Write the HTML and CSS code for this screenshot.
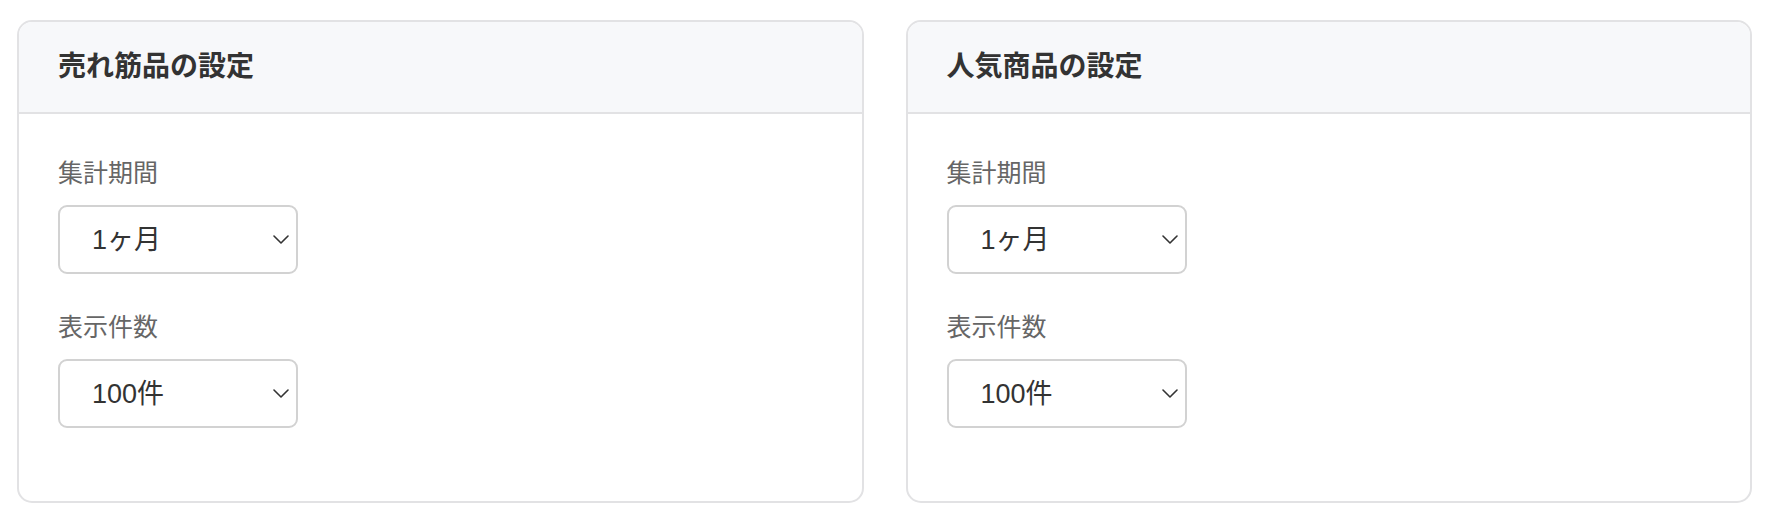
FILE: index.html
```html
<!DOCTYPE html>
<html lang="ja">
<head>
<meta charset="utf-8">
<title>設定</title>
<link rel="stylesheet" href="styles.css">
</head>
<body>
<div class="page">
  <section class="card">
    <header class="card-header"><h2 class="card-title">売れ筋品の設定</h2></header>
    <div class="card-body">
      <div class="field">
        <label class="field-label">集計期間</label>
        <div class="select-wrap">
          <select class="select"><option>1ヶ月</option></select>
          <svg class="chevron" width="16" height="9" viewBox="0 0 16 9"><path d="M1 1 L8 8 L15 1" fill="none" stroke="#333" stroke-width="1.6" stroke-linecap="round" stroke-linejoin="round"/></svg>
        </div>
      </div>
      <div class="field">
        <label class="field-label">表示件数</label>
        <div class="select-wrap">
          <select class="select"><option>100件</option></select>
          <svg class="chevron" width="16" height="9" viewBox="0 0 16 9"><path d="M1 1 L8 8 L15 1" fill="none" stroke="#333" stroke-width="1.6" stroke-linecap="round" stroke-linejoin="round"/></svg>
        </div>
      </div>
    </div>
  </section>
  <section class="card">
    <header class="card-header"><h2 class="card-title">人気商品の設定</h2></header>
    <div class="card-body">
      <div class="field">
        <label class="field-label">集計期間</label>
        <div class="select-wrap">
          <select class="select"><option>1ヶ月</option></select>
          <svg class="chevron" width="16" height="9" viewBox="0 0 16 9"><path d="M1 1 L8 8 L15 1" fill="none" stroke="#333" stroke-width="1.6" stroke-linecap="round" stroke-linejoin="round"/></svg>
        </div>
      </div>
      <div class="field">
        <label class="field-label">表示件数</label>
        <div class="select-wrap">
          <select class="select"><option>100件</option></select>
          <svg class="chevron" width="16" height="9" viewBox="0 0 16 9"><path d="M1 1 L8 8 L15 1" fill="none" stroke="#333" stroke-width="1.6" stroke-linecap="round" stroke-linejoin="round"/></svg>
        </div>
      </div>
    </div>
  </section>
</div>
</body>
</html>
```

FILE: styles.css
```css
* { box-sizing: border-box; }
html, body {
  margin: 0;
  background: #ffffff;
  font-family: "Liberation Sans", "Noto Sans CJK JP", sans-serif;
}
.page {
  display: grid;
  grid-template-columns: 1fr 1fr;
  gap: 42px;
  padding: 20px 16px 0 17px;
}
.card {
  border: 2px solid #e2e2e4;
  border-radius: 15px;
  overflow: hidden;
  background: #ffffff;
}
.card-header {
  height: 92px;
  background: #f7f8fa;
  border-bottom: 2px solid #e2e2e4;
  display: flex;
  align-items: center;
  padding: 0 39px;
}
.card-title {
  margin: 0;
  font-size: 28px;
  font-weight: 700;
  color: #333333;
  line-height: 1;
}
.card-body {
  padding: 41px 39px 73px;
}
.field + .field {
  margin-top: 35px;
}
.field-label {
  display: block;
  font-size: 25px;
  line-height: 36px;
  color: #666666;
}
.select-wrap {
  position: relative;
  width: 240px;
  margin-top: 14px;
}
.select {
  appearance: none;
  -webkit-appearance: none;
  display: block;
  width: 240px;
  height: 69px;
  border: 2px solid #d2d2d2;
  border-radius: 9px;
  background: #ffffff;
  padding: 0 40px 0 32px;
  font-family: "Liberation Sans", "Noto Sans CJK JP", sans-serif;
  font-size: 27px;
  color: #333333;
  outline: none;
}
.chevron {
  position: absolute;
  right: 9px;
  top: 30px;
  pointer-events: none;
}
```
